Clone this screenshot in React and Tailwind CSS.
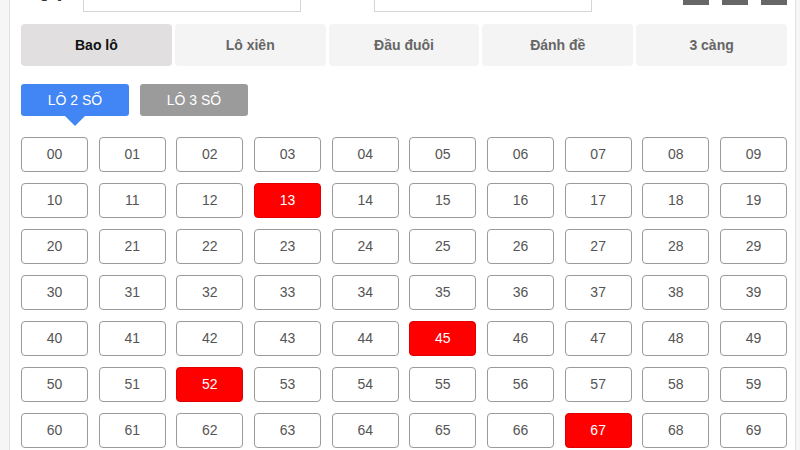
import React from "react";

const tabs = ["Bao lô", "Lô xiên", "Đầu đuôi", "Đánh đề", "3 càng"];
const red = new Set(["13", "45", "52", "67"]);

export default function App() {
  const nums = [];
  for (let i = 0; i < 70; i++) nums.push(String(i).padStart(2, "0"));
  return (
    <div
      className="min-h-[450px] w-[800px] overflow-hidden bg-[#f6f6f6]"
      style={{ fontFamily: '"Liberation Sans", Arial, sans-serif' }}
    >
      <div className="ml-[9px] h-[450px] w-[787px] overflow-hidden border-x border-[#e2e2e2] bg-white pl-[11px] pr-[8px]">
        {/* top partial row */}
        <div className="-mt-[26px] flex h-[38px] items-end">
          <div className="flex h-[38px] w-[62px] items-center pl-[8px] text-[15px] font-bold text-[#333]">
            Ngày
          </div>
          <div className="h-[38px] w-[218px] border border-[#d6d6d6] bg-white"></div>
          <div className="w-[73px]"></div>
          <div className="h-[38px] w-[218px] border border-[#d6d6d6] bg-white"></div>
          <div className="flex flex-1 justify-end gap-[13px] self-start pt-[0px]">
            <div className="h-[31px] w-[26px] bg-[#666]"></div>
            <div className="h-[31px] w-[26px] bg-[#666]"></div>
            <div className="h-[31px] w-[26px] bg-[#666]"></div>
          </div>
        </div>

        {/* tabs */}
        <div className="mt-[12px] flex w-[766px] gap-[3px]">
          {tabs.map((t, i) => (
            <div
              key={t}
              className={
                i === 0
                  ? "flex h-[42px] flex-1 items-center justify-center rounded-[4px] bg-[#e1dfdf] text-[14px] font-bold text-[#111]"
                  : "flex h-[42px] flex-1 items-center justify-center rounded-[4px] bg-[#f4f4f4] text-[14px] font-bold text-[#666]"
              }
            >
              {t}
            </div>
          ))}
        </div>

        {/* sub buttons */}
        <div className="mt-[18px] flex gap-[11px]">
          <div className="relative flex h-[32px] w-[108px] items-center justify-center rounded-[3px] bg-[#4285f4] text-[14px] text-white">
            LÔ 2 SỐ
            <div className="absolute left-1/2 top-full h-0 w-0 -translate-x-1/2 border-x-[10px] border-t-[10px] border-x-transparent border-t-[#4285f4]"></div>
          </div>
          <div className="flex h-[32px] w-[108px] items-center justify-center rounded-[3px] bg-[#9b9b9b] text-[14px] text-white">
            LÔ 3 SỐ
          </div>
        </div>

        {/* grid */}
        <div className="mt-[21px] grid w-[766px] grid-cols-10 gap-x-[10.6px] gap-y-[11px]">
          {nums.map((n) => (
            <div
              key={n}
              className={
                red.has(n)
                  ? "flex h-[35px] items-center justify-center rounded-[4px] border border-[#e00000] bg-[#ff0000] text-[14px] text-white"
                  : "flex h-[35px] items-center justify-center rounded-[4px] border border-[#9a9a9a] bg-white text-[14px] text-[#555]"
              }
            >
              {n}
            </div>
          ))}
        </div>
      </div>
    </div>
  );
}
